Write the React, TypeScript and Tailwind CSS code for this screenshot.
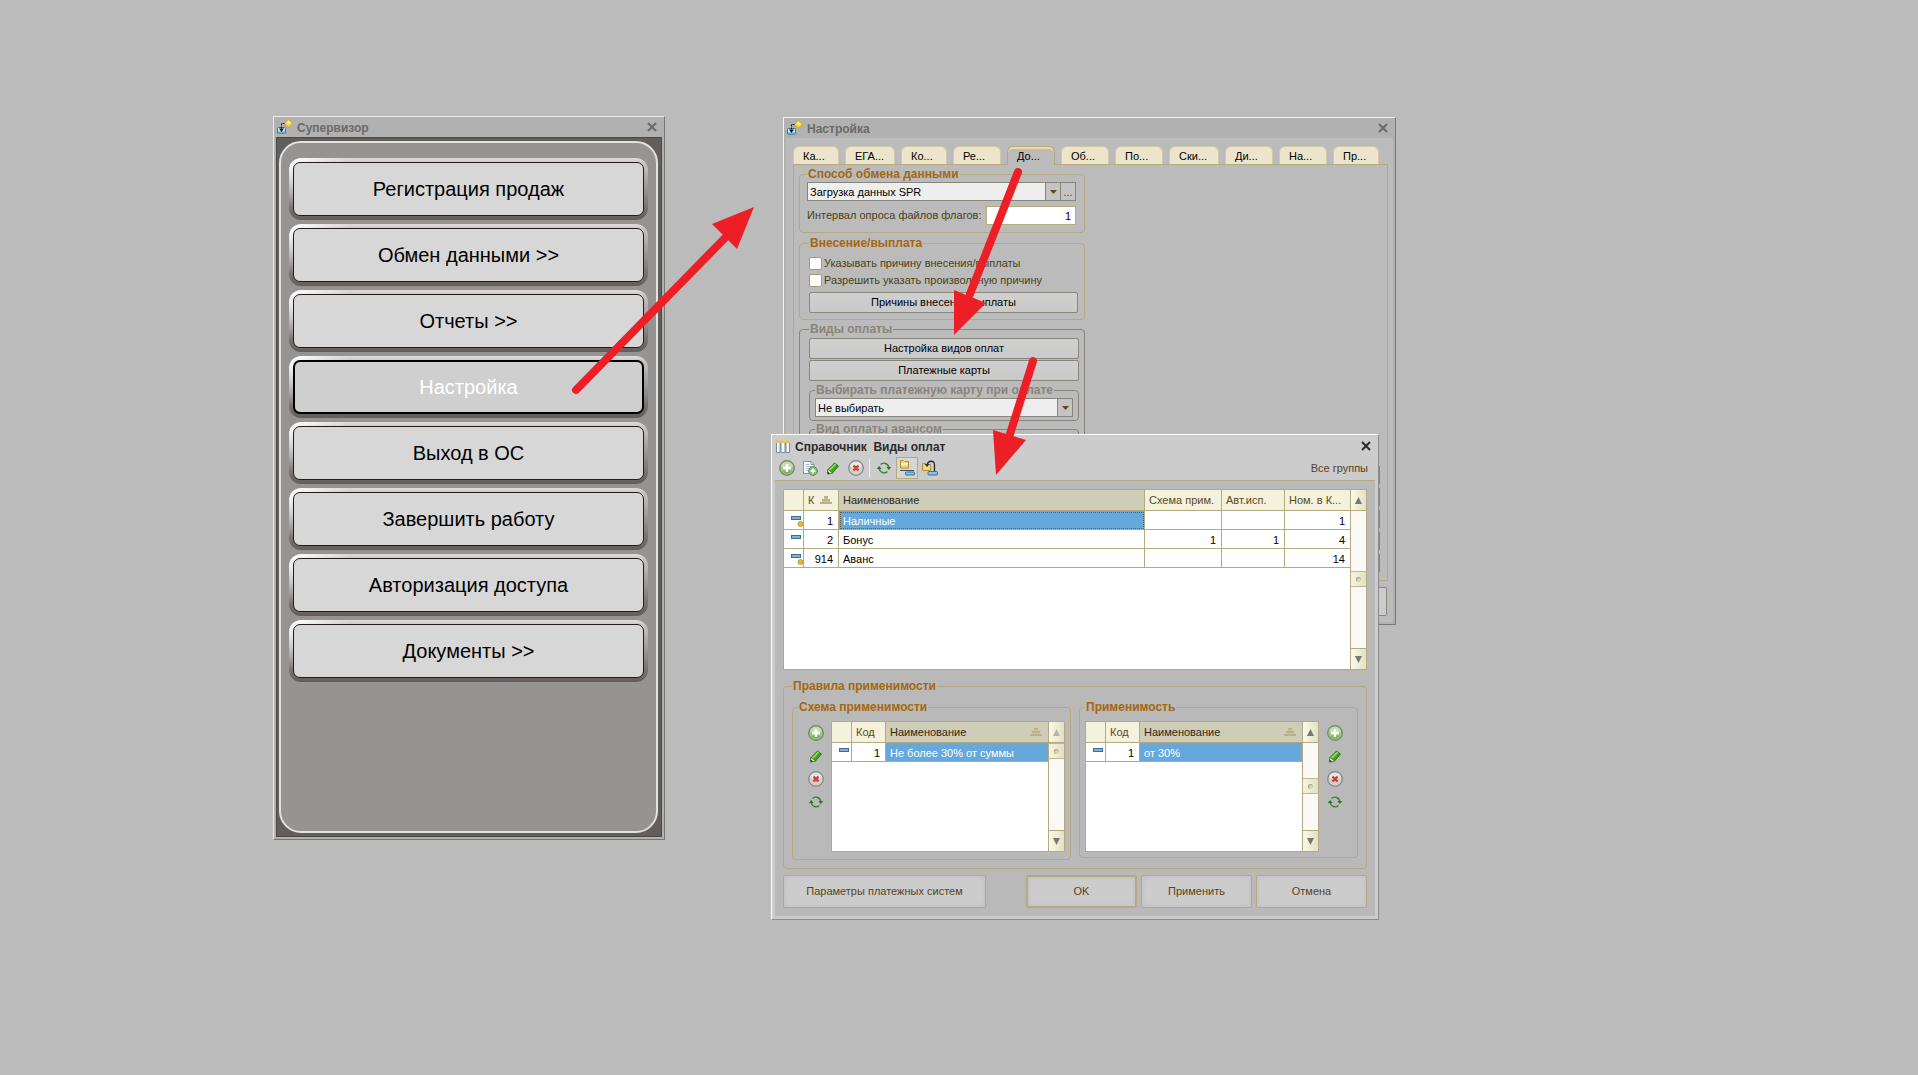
import { ReactNode } from "react";
import clsx from "clsx";

type Column = { title: string; width: string; sorted?: boolean; mark?: boolean };

type Row = { coin?: boolean; cells: string[] };

const menuItems = [
    "Регистрация продаж",
    "Обмен данными >>",
    "Отчеты >>",
    "Настройка",
    "Выход в ОС",
    "Завершить работу",
    "Авторизация доступа",
    "Документы >>",
];

const tabs = [
    { name: "Ка...", width: "w-[46px]" },
    { name: "ЕГА...", width: "w-[50px]" },
    { name: "Ко...", width: "w-[46px]" },
    { name: "Ре...", width: "w-[48px]" },
    { name: "До...", width: "w-[48px]" },
    { name: "Об...", width: "w-[48px]" },
    { name: "По...", width: "w-[48px]" },
    { name: "Ски...", width: "w-[50px]" },
    { name: "Ди...", width: "w-[48px]" },
    { name: "На...", width: "w-[48px]" },
    { name: "Пр...", width: "w-[46px]" },
];

const paymentColumns: Column[] = [
    { title: "", width: "w-[20px]" },
    { title: "К", width: "w-[35px]", mark: true },
    { title: "Наименование", width: "", sorted: true },
    { title: "Схема прим.", width: "w-[77px]" },
    { title: "Авт.исп.", width: "w-[63px]" },
    { title: "Ном. в К...", width: "w-[65px]" },
];

const paymentRows: Row[] = [
    { coin: true, cells: ["1", "Наличные", "", "", "1"] },
    { cells: ["2", "Бонус", "1", "1", "4"] },
    { coin: true, cells: ["914", "Аванс", "", "", "14"] },
];

const ruleColumns: Column[] = [
    { title: "", width: "w-[20px]" },
    { title: "Код", width: "w-[34px]" },
    { title: "Наименование", width: "", sorted: true, mark: true },
];

const AppIcon = () => (
    <svg width="16" height="16" viewBox="0 0 16 16" aria-hidden="true">
        <rect x="0.500" y="8.500" width="8" height="6" rx="1" fill="#cfe6f7" stroke="#3c6e96" />
        <path d="M1 12.500h7v2H1z" fill="#6aa9d6" />
        <path d="M11.500 0.500l4 3.800-4 3.800-4-3.800z" fill="#ffd93b" stroke="#d9a514" strokeWidth="0.800" />
        <path d="M11 1.800l2.500 2.200-3.500 1z" fill="#fff3a8" />
        <path d="M7.500 4.500h-3v7" fill="none" stroke="#111" strokeDasharray="2 1" />
        <path d="M2 9.500h5l-2.500 3.500z" fill="#111" />
    </svg>
);

const GridIcon = () => (
    <svg width="14" height="13" viewBox="0 0 14 13" aria-hidden="true">
        <path d="M0.500 2.500h3.500v10h-3.500zM5 2.500h4v10h-4zM10 2.500h3.500v10h-3.500z" fill="#f4f8f8" stroke="#5a7c88" strokeWidth="0.800" />
        <path d="M0 0.500h4v2.500H0zM5 0.500h4v2.500H5zM10 0.500h4v2.500h-4z" fill="#eac648" />
    </svg>
);

const CloseIcon = () => (
    <svg width="10" height="10" viewBox="0 0 10 10" aria-hidden="true">
        <path d="M1 1l8 8M9 1L1 9" stroke="currentColor" strokeWidth="2" fill="none" />
    </svg>
);

const AddIcon = () => (
    <svg width="16" height="16" viewBox="0 0 16 16" aria-hidden="true">
        <circle cx="8" cy="8" r="7.300" fill="#9cc983" stroke="#6f8468" strokeWidth="1.200" />
        <path d="M2 6.500a6.200 6.200 0 0 1 12 0c-3 1.500-9 1.500-12 0z" fill="#c0dfae" />
        <path d="M3 11a6 6 0 0 0 10 0c-3-1-7-1-10 0z" fill="#79b35a" />
        <path d="M8 4v8M4 8h8" stroke="#fff" strokeWidth="2.400" />
    </svg>
);

const CopyIcon = () => (
    <svg width="16" height="16" viewBox="0 0 16 16" aria-hidden="true">
        <path d="M1.500 1.500h8l2.500 3v9H1.500z" fill="#fafcff" stroke="#8196a6" />
        <path d="M9 1.500v3h3" fill="none" stroke="#8196a6" />
        <path d="M3.500 4.500h4M3.500 6.500h6M3.500 8.500h5M3.500 10.500h3" stroke="#9fbdd3" />
        <circle cx="11" cy="11" r="4.400" fill="#8cc06f" stroke="#6a8562" />
        <path d="M11 8.500v5M8.500 11h5" stroke="#fff" strokeWidth="1.600" />
    </svg>
);

const EditIcon = () => (
    <svg width="16" height="16" viewBox="0 0 16 16" aria-hidden="true">
        <path d="M2.500 14l0.500-4.500 6.500-6.500 4 3L7.500 13z" fill="#3fa51c" stroke="#1e6410" strokeWidth="0.800" />
        <path d="M4 9.500l6-6 1.300 1-6 6.300z" fill="#8fe05a" />
        <path d="M2.500 14l0.500-4.500 4.500 3.500z" fill="#f4f7e8" stroke="#2b6a1a" strokeWidth="0.600" />
        <path d="M2.500 14l0.300-2.400 2.200 1.700z" fill="#1e3a14" />
    </svg>
);

const DeleteIcon = () => (
    <svg width="16" height="16" viewBox="0 0 16 16" aria-hidden="true">
        <circle cx="8" cy="8" r="7.300" fill="#cfcfcf" stroke="#858585" strokeWidth="1.200" />
        <path d="M2 6.500a6.200 6.200 0 0 1 12 0c-3 1.500-9 1.500-12 0z" fill="#e6e6e6" />
        <path d="M5.500 5.500l5 5M10.500 5.500l-5 5" stroke="#d8392c" strokeWidth="2.300" />
    </svg>
);

const RefreshIcon = () => (
    <svg width="16" height="16" viewBox="0 0 16 16" aria-hidden="true">
        <path d="M4.500 4.500A5 5 0 0 1 12.800 7.500M11.500 11.500A5 5 0 0 1 3.200 8.500" fill="none" stroke="#2f8a22" strokeWidth="1.400" />
        <path d="M0.800 9L3.200 6l2.400 3zM10.400 7L12.800 10l2.400-3z" fill="#21751a" />
    </svg>
);

const HierarchyIcon = () => (
    <svg width="16" height="16" viewBox="0 0 16 16" aria-hidden="true">
        <path d="M1.500 0.500h3l1 1h4v6.500h-8z" fill="#f5d77a" stroke="#b68e2e" />
        <path d="M2 3h7v2H2z" fill="#fdeeb4" />
        <path d="M1 10.500h14" stroke="#3b5266" />
        <rect x="6.500" y="12" width="9" height="3" rx="0.500" fill="#8fbfe2" stroke="#3e6f97" />
    </svg>
);

const MoveIcon = () => (
    <svg width="16" height="16" viewBox="0 0 16 16" aria-hidden="true">
        <path d="M0.500 3.500h3l1 1h4v6h-8z" fill="#f5d77a" stroke="#b68e2e" />
        <path d="M5 5C6 0.500 12.500-0.500 12.500 5v6" fill="none" stroke="#222b38" strokeWidth="1.300" />
        <path d="M2.500 4h5l-2.500 3z" fill="#1d3553" />
        <rect x="6" y="11.500" width="9.500" height="3.500" rx="1" fill="#8fbfe2" stroke="#3e6f97" />
    </svg>
);

const ItemIcon = ({ coin }: { coin?: boolean }) => (
    <svg width="14" height="14" viewBox="0 0 14 14" className="ml-auto" aria-hidden="true">
        <rect x="2.500" y="3.500" width="9" height="3" fill="#7fb2da" stroke="#3f6d92" />
        {coin && <circle cx="11.500" cy="11" r="2.500" fill="#e8b93c" stroke="#b98a1c" strokeWidth="0.800" />}
    </svg>
);

const SortMark = () => (
    <svg width="12" height="8" viewBox="0 0 12 8" className="mr-[2px]" aria-hidden="true">
        <path d="M4 0h4v2H4zM2 3h8v2H2zM0 6h12v2H0z" fill="#b9b189" />
        <path d="M4 2h4v1H4zM2 5h8v1H2z" fill="#c9c4a4" />
    </svg>
);

const Titlebar = ({ title, icon, active }: { title: string; icon: ReactNode; active?: boolean }) => (
    <header className={clsx("flex items-center pr-[7px]", active ? "h-[22px] bg-[#cccccc] pl-1 text-[#2b2b2b]" : "h-5 bg-[#b1b1b1] pl-[3px] text-[#6a6a6a]")}>
        {icon}
        <h2 className={clsx("pt-px text-xs font-bold whitespace-pre", active ? "ml-[5px]" : "ml-1")}>{title}</h2>
        <button className="ml-auto" aria-label="Закрыть"><CloseIcon /></button>
    </header>
);

const Group = ({ title, tone = "gold", className, children }: { title: string; tone?: "gold" | "gray"; className?: string; children?: ReactNode }) => (
    <fieldset className={clsx("min-w-0 rounded-sm border", tone === "gold" ? "border-[#b3aa82]" : "border-[#88857a]", className)}>
        <legend className={clsx("px-px text-xs leading-[14px] font-bold", tone === "gold" ? "text-[#a5670f]" : "text-[#88857a]")}>{title}</legend>
        {children}
    </fieldset>
);

const SmallButton = ({ children }: { children: ReactNode }) => (
    <button className="block h-[21px] w-full rounded-xs border border-[#88857a] bg-linear-to-b from-[#d0d0d0] to-[#c9c9c9] text-black">{children}</button>
);

const DialogButton = ({ children, className }: { children: ReactNode; className: string }) => (
    <button className={clsx("h-[33px] rounded-xs border-[#b3aa82] bg-[#cccccc] text-[#574417] shadow-[inset_0_0_5px_#bdbdbd]", className)}>{children}</button>
);

const DropArrow = () => (
    <svg width="7" height="4" viewBox="0 0 7 4" aria-hidden="true">
        <path d="M0 0h7L3.500 4z" fill="#5f4c14" />
    </svg>
);

const Scrollbar = ({ thumb, faded }: { thumb: string; faded?: boolean }) => (
    <div className="flex w-[15px] shrink-0 flex-col bg-[#faf9f5]">
        <button className={clsx("flex h-[21px] items-center justify-center border-b border-[#b3aa82] bg-linear-to-r from-[#fbfae9] to-[#e4e0c4]", faded ? "text-[#b5b5b0]" : "text-[#777777]")} aria-label="Вверх">
            <svg width="7" height="7" viewBox="0 0 7 7"><path d="M0 7h7L3.500 0z" fill="currentColor" /></svg>
        </button>
        <div className={clsx("flex flex-1 flex-col", thumb)}>
            <div className="flex h-4 items-center justify-center border-y border-[#c0b88f] bg-linear-to-r from-[#f7f5e0] to-[#e4e0c4]">
                <span className="size-[5px] rounded-full border-t border-l border-[#a9a588] bg-[#d8d4b8]" />
            </div>
        </div>
        <button className="flex h-[21px] items-center justify-center border-t border-[#b3aa82] bg-linear-to-r from-[#fbfae9] to-[#e4e0c4] text-[#777777]" aria-label="Вниз">
            <svg width="7" height="7" viewBox="0 0 7 7"><path d="M0 0h7L3.500 7z" fill="currentColor" /></svg>
        </button>
    </div>
);

const DataGrid = ({ columns, rows, thumb, faded, focus, className }: { columns: Column[]; rows: Row[]; thumb: string; faded?: boolean; focus?: boolean; className: string }) => (
    <div className={clsx("flex border border-[#b3aa82] bg-white", className)}>
        <div className="min-w-0 flex-1 border-r border-[#b3aa82]">
            <table className="w-full table-fixed border-separate border-spacing-0">
                <thead>
                    <tr>
                        {columns.map((column, i) => (
                            <th key={i} className={clsx("h-[21px] border-b border-[#b3aa82] p-0 font-normal", column.width, i < columns.length - 1 && "border-r", column.sorted ? "bg-[#cfccb7] text-[#33280f]" : "bg-[#f4f1dd] text-[#5b4a18]")}>
                                <div className="flex items-center justify-between px-1 leading-4 whitespace-nowrap">
                                    {column.title}
                                    {column.mark && <SortMark />}
                                </div>
                            </th>
                        ))}
                    </tr>
                </thead>
                <tbody>
                    {rows.map((row, i) => (
                        <tr key={i}>
                            <td className="h-[19px] border-r border-b border-[#b3aa82] p-0"><ItemIcon coin={row.coin} /></td>
                            {row.cells.map((cell, j) => (
                                <td
                                    key={j}
                                    className={clsx(
                                        "h-[19px] border-b border-[#b3aa82] pt-px pr-[5px] pb-0 pl-1 leading-4",
                                        j < row.cells.length - 1 && "border-r",
                                        j !== 1 && "text-right text-black",
                                        j === 1 && (i === 0 ? "bg-[#66a8dc] text-white" : "text-black"),
                                        j === 1 && i === 0 && focus && "outline-1 -outline-offset-2 outline-dotted outline-[#6b5a3c]"
                                    )}
                                >
                                    {cell}
                                </td>
                            ))}
                        </tr>
                    ))}
                </tbody>
            </table>
        </div>
        <Scrollbar thumb={thumb} faded={faded} />
    </div>
);

const SideTools = () => (
    <div className="flex flex-col gap-[7px] pt-1">
        <button aria-label="Добавить"><AddIcon /></button>
        <button aria-label="Изменить"><EditIcon /></button>
        <button aria-label="Удалить"><DeleteIcon /></button>
        <button aria-label="Обновить"><RefreshIcon /></button>
    </div>
);

const Supervisor = () => (
    <section className="absolute top-[116px] left-[273px] flex h-[724px] w-[392px] flex-col border border-t-[#ececec] border-r-[#777777] border-b-[#777777] border-l-[#ececec] bg-[#b1b1b1]">
        <Titlebar title="Супервизор" icon={<AppIcon />} />
        <div className="mx-[2px] mb-[2px] flex-1 border border-[#4c4845] bg-[#625e5c] py-[3px] pr-[3px] pl-[2px]">
            <nav className="flex h-full flex-col gap-1 rounded-[22px] border-2 border-[#e2e2e1] bg-[#969492] px-2 pt-[15px]">
                {menuItems.map((item) => (
                    <div key={item} className="rounded-[12px] border border-transparent bg-[radial-gradient(ellipse_60px_50px_at_top_left,#ffffff,#ffffff00),linear-gradient(to_bottom,#dedddb,#c4c3c1_10%,#827e7c_70%,#625d5b)] bg-origin-border p-[3px]">
                        <button
                            className={clsx(
                                "block h-[54px] w-full rounded-[7px] text-[20px]",
                                item === "Настройка" ? "border-2 border-black bg-[#cfcfcf] text-white" : "border border-[#231c1a] bg-[#d7d7d7] text-black"
                            )}
                        >
                            {item}
                        </button>
                    </div>
                ))}
            </nav>
        </div>
    </section>
);

const Settings = () => (
    <section className="absolute top-[117px] left-[783px] flex h-[508px] w-[613px] flex-col border border-t-[#f2f2f2] border-r-[#777777] border-b-[#777777] border-l-[#f2f2f2] bg-[#b1b1b1] text-[11px]">
        <Titlebar title="Настройка" icon={<AppIcon />} />
        <div className="mx-[2px] mb-[2px] flex flex-1 flex-col bg-[#bbbbbb] pt-2 pr-[5px] pl-[7px]">
            <div className="flex gap-[6px]" role="tablist">
                {tabs.map((tab) => (
                    <button
                        key={tab.name}
                        role="tab"
                        className={clsx(
                            "h-[18px] shrink-0 rounded-t-md border border-b-0 pl-[9px] text-left leading-4 text-black",
                            tab.width,
                            tab.name === "До..." ? "relative -mb-px h-[19px] border-[#b3aa82] bg-[#bbbbbb] shadow-[inset_0_2px_0_#f3dc95]" : "border-[#d0c9a6] bg-[#ece5cb]"
                        )}
                    >
                        {tab.name}
                    </button>
                ))}
            </div>
            <div className="flex h-[417px] justify-between border border-[#b3aa82] pt-[2px] pl-[5px]">
                <div className="w-[286px] text-[#4c3e14]">
                    <Group title="Способ обмена данными" className="pt-px pr-2 pb-[7px] pl-[7px]">
                        <div className="flex h-[19px] border border-[#88857a] bg-[#c4c4c4]">
                            <select aria-label="Способ обмена данными" className="min-w-0 flex-1 appearance-none bg-[#eeeeee] pl-[2px] leading-4 text-black">
                                <option>Загрузка данных SPR</option>
                            </select>
                            <span className="flex w-[15px] items-center justify-center border-l border-[#88857a]"><DropArrow /></span>
                            <button className="w-[15px] border-l border-[#88857a] leading-4" aria-label="Выбрать">...</button>
                        </div>
                        <div className="mt-[5px] flex items-center justify-between">
                            <label htmlFor="interval">Интервал опроса файлов флагов:</label>
                            <input id="interval" defaultValue="1" className="h-[19px] w-[90px] border border-[#b3aa82] bg-white pr-1 text-right text-black" />
                        </div>
                    </Group>
                    <Group title="Внесение/выплата" className="mt-[3px] pt-[7px] pr-[6px] pb-[6px] pl-[9px]">
                        <div className="flex h-[13px] items-center gap-[2px]">
                            <input id="reason" type="checkbox" className="size-[13px] appearance-none rounded-xs border border-[#a39b70] bg-white" />
                            <label htmlFor="reason">Указывать причину внесения/выплаты</label>
                        </div>
                        <div className="mt-1 mb-[5px] flex h-[13px] items-center gap-[2px]">
                            <input id="custom" type="checkbox" className="size-[13px] appearance-none rounded-xs border border-[#a39b70] bg-white" />
                            <label htmlFor="custom">Разрешить указать произвольную причину</label>
                        </div>
                        <SmallButton>Причины внесения/выплаты</SmallButton>
                    </Group>
                    <Group title="Виды оплаты" tone="gray" className="mt-[2px] h-[240px] pt-[2px] pr-[5px] pl-[9px]">
                        <SmallButton>Настройка видов оплат</SmallButton>
                        <div className="mt-px"><SmallButton>Платежные карты</SmallButton></div>
                        <Group title="Выбирать платежную карту при оплате" tone="gray" className="mt-[2px] px-[5px] pt-px pb-[3px]">
                            <div className="flex h-[19px] border border-[#88857a] bg-[#c4c4c4]">
                                <select aria-label="Выбирать платежную карту" className="min-w-0 flex-1 appearance-none bg-[#eeeeee] pl-[2px] leading-4 text-black">
                                    <option>Не выбирать</option>
                                </select>
                                <span className="flex w-[15px] items-center justify-center border-l border-[#88857a]"><DropArrow /></span>
                            </div>
                        </Group>
                        <Group title="Вид оплаты авансом" tone="gray" className="mt-px h-16 px-[5px]" />
                    </Group>
                </div>
                <div className="mr-[7px] flex w-24 flex-col gap-1 pt-[299px]">
                    <div className="h-[18px] border border-[#88857a]" />
                    <div className="h-[18px] border border-[#88857a]" />
                    <div className="h-[18px] border border-[#88857a]" />
                    <div className="h-[18px] border border-[#88857a]" />
                    <div className="h-[18px] border border-[#88857a]" />
                </div>
            </div>
            <div className="mt-[6px] mr-px h-[29px] w-24 self-end rounded-xs border border-[#88857a] bg-[#cccccc]" />
        </div>
    </section>
);

const PaymentTypes = () => (
    <section className="absolute top-[434px] left-[771px] w-[608px] border border-t-white border-r-[#8b8b8b] border-b-[#8b8b8b] border-l-white bg-[#cccccc] text-[11px]">
        <Titlebar title="Справочник  Виды оплат" icon={<GridIcon />} active />
        <div className="mx-[3px] mb-[3px] bg-[#b9b9b9]">
            <div className="flex h-6 items-center border-b border-[#b3aa82] bg-[#cccccc] pr-[7px] pb-px pl-[4px] text-[#574417]">
                <button aria-label="Добавить"><AddIcon /></button>
                <button className="ml-[7px]" aria-label="Скопировать"><CopyIcon /></button>
                <button className="ml-[7px]" aria-label="Изменить"><EditIcon /></button>
                <button className="ml-[7px]" aria-label="Удалить"><DeleteIcon /></button>
                <span className="ml-[5px] h-[18px] w-px bg-[#f2f0e2]" />
                <button className="ml-[6px]" aria-label="Обновить"><RefreshIcon /></button>
                <button className="ml-1 flex size-[22px] items-center justify-center border border-[#b3aa82] bg-[#d6d6d2]" aria-label="Иерархия"><HierarchyIcon /></button>
                <button className="ml-1" aria-label="Переместить"><MoveIcon /></button>
                <button className="ml-auto">Все группы</button>
            </div>
            <div className="p-2">
                <DataGrid columns={paymentColumns} rows={paymentRows} thumb="pt-[60px]" focus className="h-[181px]" />
                <Group title="Правила применимости" className="mt-[9px] px-2 pt-[7px] pb-2">
                    <div className="grid grid-cols-2 items-start gap-2">
                        <Group title="Схема применимости" className="px-[5px] pt-[7px] pb-[7px]">
                            <div className="flex gap-[7px] pl-[10px]">
                                <SideTools />
                                <DataGrid columns={ruleColumns} rows={[{ cells: ["1", "Не более 30% от суммы"] }]} thumb="" faded className="h-[131px] flex-1" />
                            </div>
                        </Group>
                        <Group title="Применимость" className="px-[5px] pt-[7px] pb-[5px]">
                            <div className="flex gap-2 pr-[9px]">
                                <DataGrid columns={ruleColumns} rows={[{ cells: ["1", "от 30%"] }]} thumb="pt-[35px]" className="h-[131px] flex-1" />
                                <SideTools />
                            </div>
                        </Group>
                    </div>
                </Group>
                <div className="mt-[6px] flex gap-1">
                    <DialogButton className="mr-9 w-[203px] border">Параметры платежных систем</DialogButton>
                    <DialogButton className="w-[111px] border-2">OK</DialogButton>
                    <DialogButton className="w-[111px] border">Применить</DialogButton>
                    <DialogButton className="w-[111px] border">Отмена</DialogButton>
                </div>
            </div>
        </div>
    </section>
);

// red pointers that lead from one window to the next
const Arrows = () => (
    <svg width="1100" height="500" className="pointer-events-none absolute top-0 left-0" aria-hidden="true">
        <g stroke="#ed1f26" strokeWidth="8" strokeLinecap="round">
            <path d="M576 390L724 239" />
            <path d="M1018 172L970 294" />
            <path d="M1033 361L1010 434" />
        </g>
        <g fill="#ed1f26">
            <path d="M754 207L712 224L722 234L728 240L737 249z" />
            <path d="M954 335L954 290L986 303z" />
            <path d="M996 475L993 430L1026 440z" />
        </g>
    </svg>
);

const App = () => {
    return (
        <main className="relative min-h-screen overflow-hidden bg-[#bbbbbb] font-['Liberation_Sans',Arial,sans-serif]">
            <Supervisor />
            <Settings />
            <PaymentTypes />
            <Arrows />
        </main>
    );
};

export default App;
